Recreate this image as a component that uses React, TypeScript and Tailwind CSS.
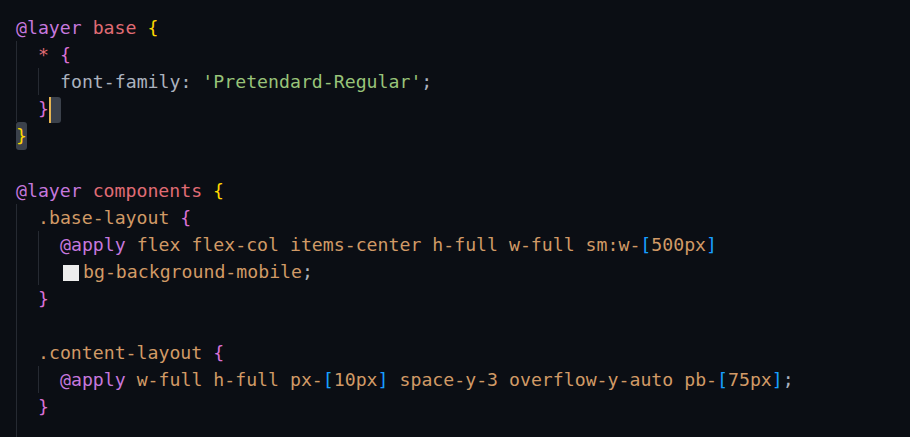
import React from 'react'

const c = {
  at: 'text-[#c678dd]',
  red: 'text-[#e06c75]',
  gold: 'text-[#ffd700]',
  pink: 'text-[#da70d6]',
  blue: 'text-[#179fff]',
  plain: 'text-[#abb2bf]',
  str: 'text-[#98c379]',
  cls: 'text-[#d19a66]',
}

function Line({ children }: { children?: React.ReactNode }) {
  return <div className="h-[27.1px] whitespace-pre leading-[27.1px]">{children}</div>
}

function Block({ children }: { children: React.ReactNode }) {
  return <div className="border-l border-[#262a32] pl-[21px]">{children}</div>
}

function Apply({ classes }: { classes: string }) {
  // split out [..] so the brackets get their own colour
  const parts = classes.split(/(\[|\])/)
  return (
    <>
      {parts.map((p, i) => (
        <span key={i} className={p === '[' || p === ']' ? c.blue : c.cls}>
          {p}
        </span>
      ))}
    </>
  )
}

export default function App() {
  return (
    <div
      className="min-h-screen w-full bg-[#0b0e14] pl-4 pt-[14px] text-[18.2px]"
      style={{ fontFamily: '"DejaVu Sans Mono", monospace' }}
    >
      <Line>
        <span className={c.at}>@layer</span>
        <span className={c.red}> base </span>
        <span className={c.gold}>{'{'}</span>
      </Line>
      <Block>
        <Line>
          <span className={c.red}>* </span>
          <span className={c.pink}>{'{'}</span>
        </Line>
        <Block>
          <Line>
            <span className={c.plain}>font-family: </span>
            <span className={c.str}>'Pretendard-Regular'</span>
            <span className={c.plain}>;</span>
          </Line>
        </Block>
        <Line>
          <span className={c.pink}>{'}'}</span>
          <span className="inline-block h-[26px] w-[2px] bg-[#e6b450] align-middle" />
          <span className="inline-block h-[26px] w-[10px] rounded-r-[3px] bg-[#3b414b] align-middle" />
        </Line>
      </Block>
      <Line>
        <span className={`${c.gold} inline-block h-[28px] rounded-[3px] bg-[#3b414b] align-top leading-[28px]`}>
          {'}'}
        </span>
      </Line>
      <Line />
      <Line>
        <span className={c.at}>@layer</span>
        <span className={c.red}> components </span>
        <span className={c.gold}>{'{'}</span>
      </Line>
      <Block>
        <Line>
          <span className={c.cls}>.base-layout </span>
          <span className={c.pink}>{'{'}</span>
        </Line>
        <Block>
          <Line>
            <span className={c.at}>@apply </span>
            <Apply classes="flex flex-col items-center h-full w-full sm:w-[500px]" />
          </Line>
          <Line>
            <span className="mr-[4px] ml-[3px] inline-block h-[16px] w-[16px] bg-[#ededed] align-middle" />
            <span className={c.cls}>bg-background-mobile</span>
            <span className={c.plain}>;</span>
          </Line>
        </Block>
        <Line>
          <span className={c.pink}>{'}'}</span>
        </Line>
        <Line />
        <Line>
          <span className={c.cls}>.content-layout </span>
          <span className={c.pink}>{'{'}</span>
        </Line>
        <Block>
          <Line>
            <span className={c.at}>@apply </span>
            <Apply classes="w-full h-full px-[10px] space-y-3 overflow-y-auto pb-[75px]" />
            <span className={c.plain}>;</span>
          </Line>
        </Block>
        <Line>
          <span className={c.pink}>{'}'}</span>
        </Line>
        <Line />
      </Block>
    </div>
  )
}
